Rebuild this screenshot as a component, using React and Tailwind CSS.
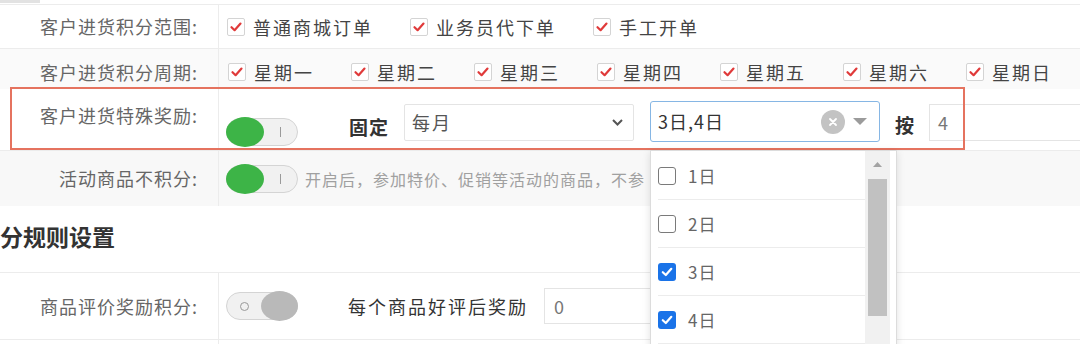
import React from "react";

const RedCheck = ({ label }) => (
  <div className="flex items-center gap-[8px]">
    <span className="w-[18px] h-[18px] border border-[#d4d4d4] rounded-[2px] bg-white flex items-center justify-center">
      <svg width="14" height="14" viewBox="0 0 14 14">
        <path d="M2.5 7.2 L5.6 10.2 L11.5 3.6" fill="none" stroke="#e03a3a" strokeWidth="2.2" strokeLinecap="round" strokeLinejoin="round" />
      </svg>
    </span>
    <span className="text-[18px] tracking-[2px] text-[#444] leading-[24px]">{label}</span>
  </div>
);

const SwitchOn = () => (
  <div className="w-[72px] h-[28px] rounded-full border border-[#d4d4d4] bg-[#f1f1f1] flex items-center shrink-0">
    <div className="w-[38px] h-[30px] -ml-px rounded-[50%] bg-[#3db447]" />
    <div className="ml-[16px] w-px h-[10px] bg-[#9a9a9a]" />
  </div>
);

const SwitchOff = () => (
  <div className="w-[72px] h-[28px] rounded-full border border-[#d4d4d4] bg-[#f1f1f1] flex items-center justify-between shrink-0">
    <div className="ml-[13px] w-[9px] h-[9px] rounded-full border border-[#999]" />
    <div className="w-[37px] h-[30px] -mr-px rounded-[50%] bg-[#b9b9b9]" />
  </div>
);

const Label = ({ children, className = "" }) => (
  <div className={"w-[219px] shrink-0 border-r border-[#ececec] pr-[20px] text-right text-[18px] tracking-[1px] text-[#666] " + className}>
    {children}
  </div>
);

const DayItem = ({ label, checked }) => (
  <div className="h-[48px] border-b border-[#ececec] flex items-center">
    {checked ? (
      <span className="w-[18px] h-[18px] rounded-[3px] bg-[#1a73e8] flex items-center justify-center">
        <svg width="14" height="14" viewBox="0 0 14 14">
          <path d="M2.8 7.2 L5.8 10 L11.3 3.8" fill="none" stroke="#fff" strokeWidth="2.2" strokeLinecap="round" strokeLinejoin="round" />
        </svg>
      </span>
    ) : (
      <span className="w-[18px] h-[18px] rounded-[3px] border-[1.5px] border-[#7a7a7a] bg-white" />
    )}
    <span className="ml-[12px] text-[17px] tracking-[1px] text-[#666]">{label}</span>
  </div>
);

export default function App() {
  const days = ["星期一", "星期二", "星期三", "星期四", "星期五", "星期六", "星期日"];

  return (
    <div className="w-[1080px] h-[344px] overflow-hidden bg-white font-['Noto_Sans_CJK_SC','Noto_Sans',sans-serif]">
      {/* top strip */}
      <div className="h-[5px] border-b border-[#ececec] flex">
        <div className="w-[40px] h-[3px] bg-[#e2e2e2]" />
      </div>

      {/* 范围 */}
      <div className="h-[44px] flex border-b border-[#ececec]">
        <Label className="flex items-center justify-end">客户进货积分范围:</Label>
        <div className="flex items-center pl-[8px] gap-[37px]">
          <RedCheck label="普通商城订单" />
          <RedCheck label="业务员代下单" />
          <RedCheck label="手工开单" />
        </div>
      </div>

      {/* 周期 */}
      <div className="h-[40px] flex bg-[#fafafa]">
        <Label className="flex items-center justify-end pt-[6px]">客户进货积分周期:</Label>
        <div className="flex items-center pl-[9px] pt-[6px] gap-[37px]">
          {days.map((d) => (
            <RedCheck key={d} label={d} />
          ))}
        </div>
      </div>

      {/* 特殊奖励 */}
      <div className="relative h-[62px] flex border-b border-[#ececec]">
        <Label className="pt-[14px] leading-[24px]">客户进货特殊奖励:</Label>
        <div className="flex-1 flex items-start pl-[7px]">
          <div className="mt-[29px]">
            <SwitchOn />
          </div>
          <span className="ml-[51px] mt-[25px] text-[19px] leading-[26px] tracking-[1px] font-bold text-[#333]">固定</span>
          <div className="ml-[15px] mt-[15px] w-[230px] h-[37px] border border-[#e4e4e4] rounded-[2px] bg-white flex items-center justify-between pl-[7px] pr-[10px]">
            <span className="text-[18px] tracking-[2px] text-[#555]">每月</span>
            <svg width="11" height="7" viewBox="0 0 11 7">
              <path d="M1 1 L5.5 5.5 L10 1" fill="none" stroke="#555" strokeWidth="2" />
            </svg>
          </div>
          <div className="relative ml-[16px] mt-[12px]">
            <div className="w-[230px] h-[41px] border-[1.5px] border-[#86b6e4] rounded-[3px] bg-white flex items-center pl-[7px] pr-[12px]">
              <span className="flex-1 text-[18px] tracking-[1px] text-[#333]">3日,4日</span>
              <span className="w-[24px] h-[24px] rounded-full bg-[#c3c3c3] flex items-center justify-center">
                <svg width="10" height="10" viewBox="0 0 10 10">
                  <path d="M2 2 L8 8 M8 2 L2 8" stroke="#fff" strokeWidth="1.8" strokeLinecap="round" />
                </svg>
              </span>
              <svg className="ml-[8px]" width="14" height="7" viewBox="0 0 14 7">
                <path d="M0 0 L14 0 L7 7 Z" fill="#9b9b9b" />
              </svg>
            </div>

            {/* dropdown */}
            <div className="absolute z-20 left-0 top-[49px] w-[247px] h-[200px] bg-white border border-[#dcdcdc] shadow-[0_2px_8px_rgba(0,0,0,0.12)] flex">
              <div className="w-[214px] pl-[7px] pt-[1px]">
                <DayItem label="1日" />
                <DayItem label="2日" />
                <DayItem label="3日" checked />
                <DayItem label="4日" checked />
              </div>
              <div className="w-[25px] bg-[#f1f1f1] flex flex-col items-center pt-[11px]">
                <svg width="9" height="5" viewBox="0 0 9 5">
                  <path d="M0 5 L4.5 0 L9 5 Z" fill="#a3a3a3" />
                </svg>
                <div className="mt-[12px] w-[19px] h-[137px] bg-[#c1c1c1]" />
              </div>
            </div>
          </div>
          <span className="ml-[15px] mt-[23px] text-[19px] leading-[26px] font-bold text-[#333]">按</span>
          <div className="ml-[15px] mt-[15px] flex-1 h-[37px] border border-[#e4e4e4] border-r-0 bg-white flex items-center pl-[8px]">
            <span className="text-[18px] text-[#777]">4</span>
          </div>
        </div>

        {/* highlight frame */}
        <div className="absolute z-10 left-[10px] top-[-2px] w-[955px] h-[63px] border-2 border-[#e5735f] pointer-events-none" />
      </div>

      {/* 活动商品 */}
      <div className="h-[55px] flex bg-[#f8f8f8]">
        <Label className="flex items-center justify-end">活动商品不积分:</Label>
        <div className="flex items-center pl-[7px] whitespace-nowrap">
          <SwitchOn />
          <span className="ml-[7px] text-[16px] tracking-[1px] text-[#a0a0a0]">开启后，参加特价、促销等活动的商品，不参</span>
        </div>
      </div>

      {/* heading */}
      <div className="h-[66px] pt-[15px]">
        <h2 className="text-[23px] leading-[30px] font-bold text-[#333]">分规则设置</h2>
      </div>

      {/* 商品评价 */}
      <div className="h-[68px] flex border-t border-b border-[#ececec]">
        <Label className="flex items-center justify-end">商品评价奖励积分:</Label>
        <div className="flex items-center pl-[7px]">
          <SwitchOff />
          <span className="ml-[50px] text-[18px] tracking-[2px] text-[#333]">每个商品好评后奖励</span>
          <div className="ml-[16px] w-[240px] h-[36px] border border-[#e4e4e4] bg-white flex items-center pl-[9px]">
            <span className="text-[18px] text-[#777]">0</span>
          </div>
        </div>
      </div>

      <div className="h-[20px] flex">
        <Label />
      </div>
    </div>
  );
}
